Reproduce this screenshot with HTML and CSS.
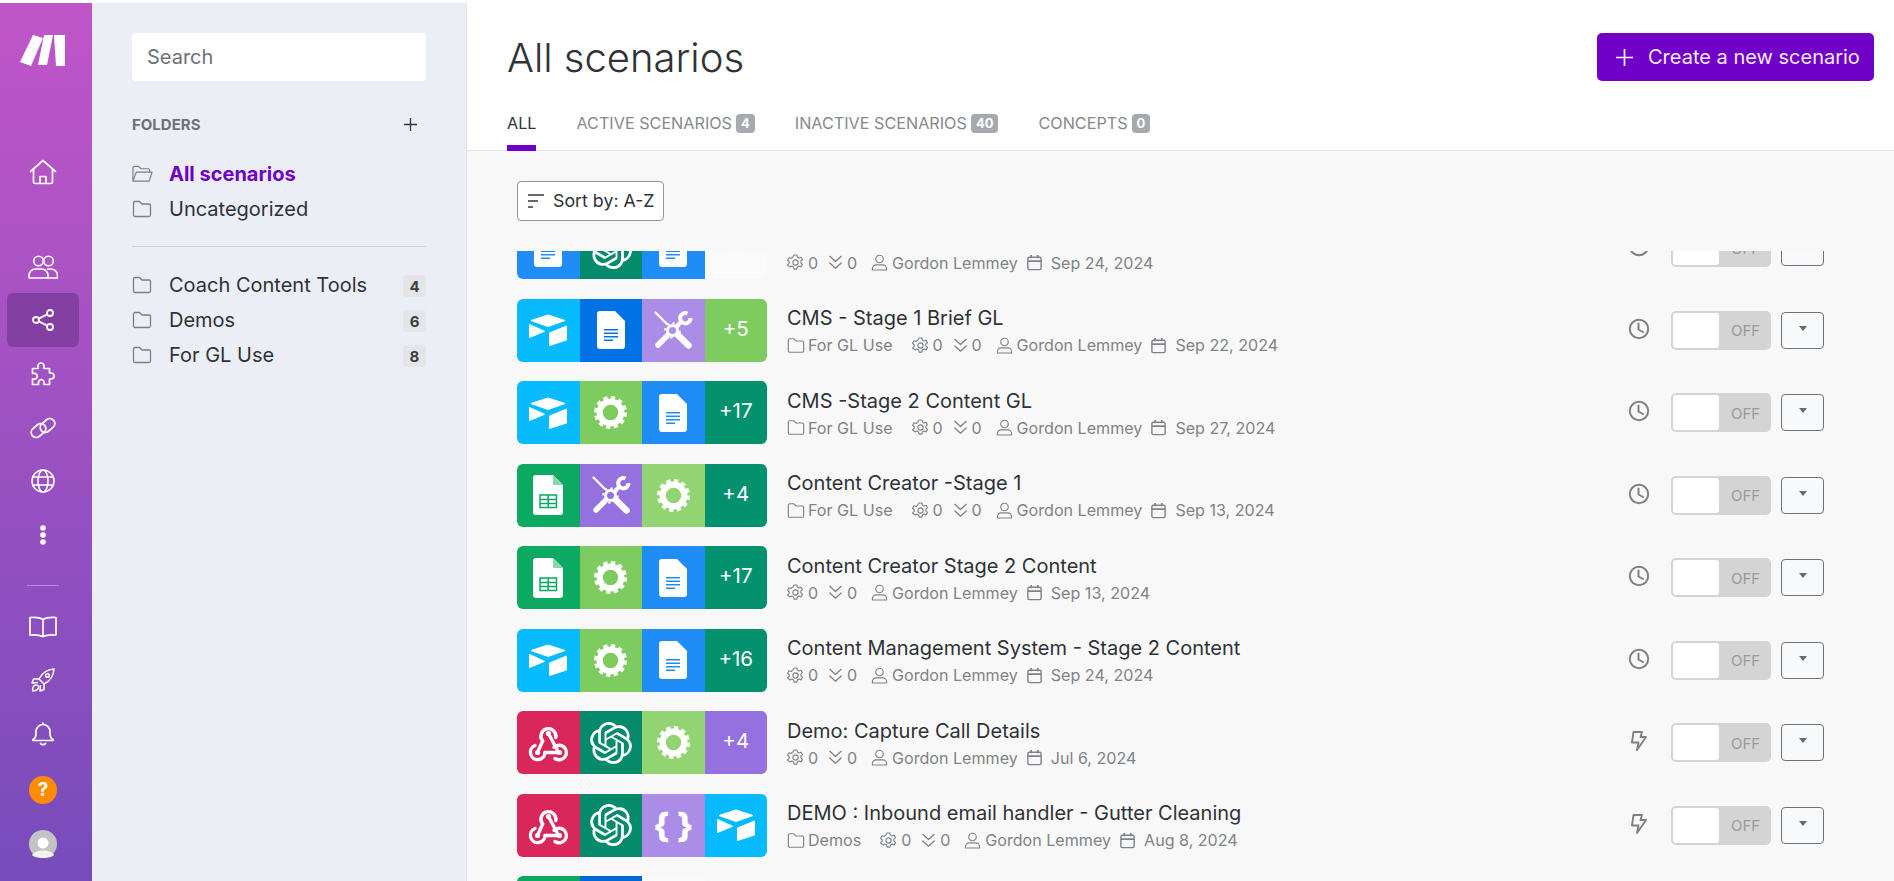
FILE: index.html
```html
<!DOCTYPE html>
<html lang="en">
<head>
<meta charset="utf-8">
<title>All scenarios</title>
<link rel="stylesheet" href="styles.css">
</head>
<body>
<svg class="defs" aria-hidden="true">
  <symbol id="air" viewBox="0 0 38 32"><path d="M19 1 36 6.500 19 12.500 2 6.500Z" fill="#fff" stroke="#fff" stroke-linejoin="round"/><path d="M.5 10.500 15.500 17.300.5 23.500Z" fill="#fff" stroke="#fff" stroke-linejoin="round"/><path d="M20.500 19 37.500 12V26L20.500 31.500Z" fill="#fff" stroke="#fff" stroke-linejoin="round"/></symbol>
  <symbol id="doc" viewBox="0 0 28 38"><path d="M3 0H18L28 10V35a3 3 0 0 1-3 3H3a3 3 0 0 1-3-3V3a3 3 0 0 1 3-3Z" fill="#fff"/><path d="M7 18h14v1.500H7zM7 21.500h14V23H7zM7 25h14v1.500H7zM7 28.500h9V30H7z" fill="currentColor"/></symbol>
  <symbol id="sheet" viewBox="0 0 30 40"><path d="M3 0H20L30 10V37a3 3 0 0 1-3 3H3a3 3 0 0 1-3-3V3a3 3 0 0 1 3-3Z" fill="#fff"/><path d="M20 0 30 10H20Z" fill="#8fd4b0"/><path d="M7 20h16.500v12.500H7zM7 24.500h16.500M7 28.500h16.500M15.200 20v12.500" fill="none" stroke="currentColor" stroke-width="1.500"/></symbol>
  <symbol id="gear" viewBox="0 0 32 32"><circle cx="16" cy="16" r="10.500" fill="none" stroke="#fff" stroke-width="6"/><circle cx="16" cy="16" r="14.500" fill="none" stroke="#fff" stroke-width="3" stroke-dasharray="4.200 3.390"/></symbol>
  <symbol id="tools" viewBox="0 0 40 40"><g fill="none" stroke="#fff" stroke-linecap="round"><path d="M2.500 2.500 14 14" stroke-width="2.200"/><path d="M25 25 35.500 35.500" stroke-width="6.500"/><path d="M14 26 5 35" stroke-width="5.500"/><path d="M28 12 24.500 15.500" stroke-width="4"/><path d="M34.500 3.500A5.200 5.200 0 1 0 37.500 8" stroke-width="4" stroke-linecap="butt"/><circle cx="19.500" cy="20.500" r="5" stroke-width="3"/><circle cx="19.500" cy="20.500" r="7.300" stroke-width="2" stroke-dasharray="2.400 3.300" stroke-linecap="butt"/></g></symbol>
  <symbol id="hook" viewBox="-1.500 -1.500 41 39"><g fill="none" stroke="#fff" stroke-width="3.400" stroke-linecap="round"><path d="M8 28 13.200 16.500A7.500 7.500 0 1 1 26.300 13"/><path d="M19 9 28 26"/><path d="M24.500 22.800A7.300 7.300 0 1 1 25.500 34"/><path d="M30 28H15.500"/><path d="M15.500 28A7.300 7.300 0 1 1 5.500 21"/></g><circle cx="19" cy="9" r="2.600" fill="#fff"/><circle cx="8" cy="28" r="2.600" fill="#fff"/><circle cx="30" cy="28" r="2.600" fill="#fff"/></symbol>
  <symbol id="ai" viewBox="0 0 24 24"><path fill="#fff" d="M22.2819 9.8211a5.9847 5.9847 0 0 0-.5157-4.9108 6.0462 6.0462 0 0 0-6.5098-2.9A6.0651 6.0651 0 0 0 4.9807 4.1818a5.9847 5.9847 0 0 0-3.9977 2.9 6.0462 6.0462 0 0 0 .7427 7.0966 5.98 5.98 0 0 0 .511 4.9107 6.051 6.051 0 0 0 6.5146 2.9001A5.9847 5.9847 0 0 0 13.2599 24a6.0557 6.0557 0 0 0 5.7718-4.2058 5.9894 5.9894 0 0 0 3.9977-2.9001 6.0557 6.0557 0 0 0-.7475-7.0729zm-9.022 12.6081a4.4755 4.4755 0 0 1-2.8764-1.0408l.1419-.0804 4.7783-2.7582a.7948.7948 0 0 0 .3927-.6813v-6.7369l2.02 1.1686a.071.071 0 0 1 .038.052v5.5826a4.504 4.504 0 0 1-4.4945 4.4944zm-9.6607-4.1254a4.4708 4.4708 0 0 1-.5346-3.0137l.142.0852 4.783 2.7582a.7712.7712 0 0 0 .7806 0l5.8428-3.3685v2.3324a.0804.0804 0 0 1-.0332.0615L9.74 19.9502a4.4992 4.4992 0 0 1-6.1408-1.6464zM2.3408 7.8956a4.485 4.485 0 0 1 2.3655-1.9728V11.6a.7664.7664 0 0 0 .3879.6765l5.8144 3.3543-2.0201 1.1685a.0757.0757 0 0 1-.071 0l-4.8303-2.7865A4.504 4.504 0 0 1 2.3408 7.872zm16.5963 3.8558L13.1038 8.364 15.1192 7.2a.0757.0757 0 0 1 .071 0l4.8303 2.7913a4.4944 4.4944 0 0 1-.6765 8.1042v-5.6772a.79.79 0 0 0-.407-.667zm2.0107-3.0231l-.142-.0852-4.7735-2.7818a.7759.7759 0 0 0-.7854 0L9.409 9.2297V6.8974a.0662.0662 0 0 1 .0284-.0615l4.8303-2.7866a4.4992 4.4992 0 0 1 6.6802 4.66zM8.3065 12.863l-2.02-1.1638a.0804.0804 0 0 1-.038-.0567V6.0742a4.4992 4.4992 0 0 1 7.3757-3.4537l-.142.0805L8.704 5.459a.7948.7948 0 0 0-.3927.6813zm1.0976-2.3654l2.602-1.4998 2.6069 1.4998v2.9994l-2.5974 1.4997-2.6067-1.4997Z"/></symbol>

  <symbol id="folder" viewBox="0 0 20 18"><path d="M1.500 3a1.500 1.500 0 0 1 1.500-1.500h4.500L10 4h7a1.500 1.500 0 0 1 1.500 1.500V15a1.500 1.500 0 0 1-1.500 1.500H3A1.500 1.500 0 0 1 1.500 15Z" fill="none" stroke="currentColor" stroke-width="1.300"/></symbol>
  <symbol id="folder-open" viewBox="0 0 22 18"><path d="M1 15.500V2.500A1.500 1.500 0 0 1 2.500 1H7l2.500 2.500H17A1.500 1.500 0 0 1 18.500 5v2M1 16.500 4.500 7H21l-3 9.500Z" fill="none" stroke="currentColor" stroke-width="1.200" stroke-linejoin="round"/></symbol>
  <symbol id="plus" viewBox="0 0 17 17"><path d="M8.500 0V17M0 8.500H17" fill="none" stroke="currentColor" stroke-width="1.700"/></symbol>
  <symbol id="cog" viewBox="0 0 18 18"><g fill="none" stroke="currentColor" stroke-width="1.200" stroke-linejoin="round"><path d="M7.500 1h3l.5 2.300 1.700.9 2.200-.8 1.500 2.600-1.700 1.600v1.800l1.700 1.600-1.500 2.600-2.200-.8-1.700.9-.5 2.300h-3l-.5-2.300-1.700-.9-2.200.8L.6 11.600l1.700-1.600V8.200L.6 6.600l1.500-2.600 2.200.8L6 3.300Z"/><circle cx="9" cy="9" r="2.800"/></g></symbol>
  <symbol id="chev" viewBox="0 0 18 18"><path d="M3 2.500 9 8 15 2.500M3 9.500 9 15 15 9.500" fill="none" stroke="currentColor" stroke-width="1.400" stroke-linecap="round" stroke-linejoin="round"/></symbol>
  <symbol id="user" viewBox="0 0 18 18"><g fill="none" stroke="currentColor" stroke-width="1.200"><circle cx="9" cy="5.300" r="4"/><path d="M1.500 17v-1.500a4 4 0 0 1 4-4h7a4 4 0 0 1 4 4V17Z" stroke-linejoin="round"/></g></symbol>
  <symbol id="cal" viewBox="0 0 18 18"><g fill="none" stroke="currentColor" stroke-width="1.500"><rect x="2" y="3.500" width="14" height="13" rx="1.500"/><path d="M2 7.500h14M5.500 1v3.500M12.500 1v3.500" stroke-width="1.800"/></g></symbol>
  <symbol id="clock" viewBox="0 0 22 22"><g fill="none" stroke="#808080" stroke-width="2"><circle cx="11" cy="11" r="9.200"/><path d="M10.500 5.500V11.500L15 14" stroke-linecap="round"/></g></symbol>
  <symbol id="bolt" viewBox="0 0 16 20"><path d="M2.500 1H11L9.500 6H15L6 19l1.500-7.500H1Z" fill="none" stroke="#808080" stroke-width="1.900" stroke-linejoin="round"/></symbol>

  <symbol id="n-home" viewBox="0 0 28 26"><path d="M1.500 12.500 14 1.500 26.500 12.500M4.500 10.500V23a1.500 1.500 0 0 0 1.500 1.500H22a1.500 1.500 0 0 0 1.500-1.500V10.500M11 24.500V17.500H17V24.500" fill="none" stroke="#fff" stroke-width="1.700" stroke-linejoin="round" stroke-linecap="round"/></symbol>
  <symbol id="n-team" viewBox="0 0 30 24"><g fill="none" stroke="#fff" stroke-width="1.600"><circle cx="10.500" cy="6" r="4.800"/><circle cx="20.500" cy="6" r="4.800"/><path d="M1 23v-2.500a6.500 6.500 0 0 1 6.500-6.500h6a6.500 6.500 0 0 1 6.500 6.500V23Z" stroke-linejoin="round"/><path d="M19 14h4a6.500 6.500 0 0 1 6.500 6.500V23H20"/></g></symbol>
  <symbol id="n-share" viewBox="0 0 22 22"><g fill="none" stroke="#fff" stroke-width="1.800"><circle cx="4" cy="11" r="3"/><circle cx="18" cy="4" r="3"/><circle cx="18" cy="18" r="3"/><path d="M6.700 9.600 15.300 5.400M6.700 12.400 15.300 16.600"/></g></symbol>
  <symbol id="n-puzzle" viewBox="0 0 25 25"><path d="M1.500 7.500H7V5a3 3 0 1 1 6 0v2.500h5.500V12H20a3 3 0 1 1 0 6h-1.500v5.500H13V22a2.800 2.800 0 1 0-5.500 0v1.500h-6V18H3a2.800 2.800 0 1 0 0-5.500H1.500Z" fill="none" stroke="#fff" stroke-width="1.700" stroke-linejoin="round"/></symbol>
  <symbol id="n-link" viewBox="0 0 28 22"><g fill="none" stroke="#fff" stroke-width="1.800"><rect x="1.500" y="8.500" width="16" height="10" rx="5" transform="rotate(-40 9.500 13.500)"/><rect x="10.500" y="3.500" width="16" height="10" rx="5" transform="rotate(-40 18.500 8.500)"/></g></symbol>
  <symbol id="n-globe" viewBox="0 0 24 24"><g fill="none" stroke="#fff" stroke-width="1.600"><circle cx="12" cy="12" r="11"/><ellipse cx="12" cy="12" rx="5" ry="11"/><path d="M2 8h20M2 16h20"/></g></symbol>
  <symbol id="n-dots" viewBox="0 0 6 20"><circle cx="3" cy="3" r="2.800" fill="#fff"/><circle cx="3" cy="10" r="2.800" fill="#fff"/><circle cx="3" cy="17" r="2.800" fill="#fff"/></symbol>
  <symbol id="n-book" viewBox="0 0 28 22"><path d="M14 3.500C11 1.500 6 1 1 1.500V19C6 18.500 11 19 14 20.500 17 19 22 18.500 27 19V1.500C22 1 17 1.500 14 3.500ZM14 3.500V20.500" fill="none" stroke="#fff" stroke-width="1.700" stroke-linejoin="round"/></symbol>
  <symbol id="n-rocket" viewBox="0 0 24 24"><g fill="none" stroke="#fff" stroke-width="1.500" stroke-linejoin="round"><path d="M23 1c-7 .5-12 4-15 10l5 5c6-3 9.500-8 10-15Z"/><circle cx="16.500" cy="7.500" r="1.800"/><path d="M8 11H2.500L1 15l6-.5M13 16v5.500L9 23l.5-6"/><path d="M2 23c-1-3 .5-6 3-6s3.500 2.500 2 4c-1.500 1.500-3 2-5 2Z"/></g></symbol>
  <symbol id="n-bell" viewBox="0 0 22 24"><path d="M1 17.500c2-1 3-3 3-6.500V9.500a7 7 0 0 1 14 0V11c0 3.500 1 5.500 3 6.500v1H1ZM11 2.500V1M8.500 21.500c1 1.500 4 1.500 5 0" fill="none" stroke="#fff" stroke-width="1.700" stroke-linejoin="round" stroke-linecap="round"/></symbol>
  <symbol id="n-avatar" viewBox="0 0 28 28"><circle cx="14" cy="14" r="14" fill="#c3c3c3"/><circle cx="14" cy="13" r="5.500" fill="#fff"/><path d="M3 25c3-6 19-6 22 0-3 4-19 4-22 0Z" fill="#f2f2f2"/></symbol>
</svg>

<div class="app">
  <nav class="rail">
    <svg class="logo" viewBox="0 0 45 31" aria-label="Make"><path d="M13 0 23 3 11 31 0 27Z M24 0H33L27 30H18Z M34 0H45V31H36Z" fill="#fff"/></svg>
    <a class="nav nav-home"><svg class="nv i28"><use href="#n-home"/></svg></a>
    <div class="nav-group">
      <a class="nav"><svg class="nv i30"><use href="#n-team"/></svg></a>
      <a class="nav active"><svg class="nv i22"><use href="#n-share"/></svg></a>
      <a class="nav"><svg class="nv i25"><use href="#n-puzzle"/></svg></a>
      <a class="nav"><svg class="nv i28"><use href="#n-link"/></svg></a>
      <a class="nav"><svg class="nv i24"><use href="#n-globe"/></svg></a>
      <a class="nav"><svg class="nv dots"><use href="#n-dots"/></svg></a>
    </div>
    <hr class="rail-rule">
    <div class="nav-group">
      <a class="nav"><svg class="nv i28"><use href="#n-book"/></svg></a>
      <a class="nav"><svg class="nv i24"><use href="#n-rocket"/></svg></a>
      <a class="nav"><svg class="nv i22b"><use href="#n-bell"/></svg></a>
      <a class="nav nav-help"><span class="help">?</span></a>
      <a class="nav nav-avatar"><svg class="nv avatar"><use href="#n-avatar"/></svg></a>
    </div>
  </nav>

  <aside class="panel">
    <div class="search">Search</div>
    <div class="folders-head"><span>FOLDERS</span><svg class="folders-plus"><use href="#plus"/></svg></div>
    <ul class="folder-list">
      <li class="folder current"><svg class="fi fi-open"><use href="#folder-open"/></svg><span>All scenarios</span></li>
      <li class="folder"><svg class="fi"><use href="#folder"/></svg><span>Uncategorized</span></li>
    </ul>
    <hr class="panel-rule">
    <ul class="folder-list">
      <li class="folder"><svg class="fi"><use href="#folder"/></svg><span>Coach Content Tools</span><b class="count">4</b></li>
      <li class="folder"><svg class="fi"><use href="#folder"/></svg><span>Demos</span><b class="count">6</b></li>
      <li class="folder"><svg class="fi"><use href="#folder"/></svg><span>For GL Use</span><b class="count">8</b></li>
    </ul>
  </aside>

  <main class="main">
    <header class="head">
      <h1>All scenarios</h1>
      <button class="create"><svg class="create-plus"><use href="#plus"/></svg>Create a new scenario</button>
    </header>
    <div class="tabs">
      <a class="tab on">ALL</a>
      <a class="tab">ACTIVE SCENARIOS<i class="tag">4</i></a>
      <a class="tab">INACTIVE SCENARIOS<i class="tag">40</i></a>
      <a class="tab">CONCEPTS<i class="tag">0</i></a>
    </div>
    <div class="content">
      <div class="toolbar">
        <button class="sort"><svg class="sort-ic" viewBox="0 0 16 14"><path d="M0 1h16M0 7h10M0 13h5" fill="none" stroke="#33373b" stroke-width="1.600"/></svg>Sort by: A-Z</button>
      </div>
      <div class="list">
        <div class="list-inner">

          <div class="row">
            <div class="tiles"><div class="tile c-doc"><svg class="t-doc"><use href="#doc"/></svg></div><div class="tile c-ai"><svg class="t-ai"><use href="#ai"/></svg></div><div class="tile c-doc"><svg class="t-doc"><use href="#doc"/></svg></div><div class="tile c-blank"><svg class="t-ghost" viewBox="0 0 48 24"><path d="M24 0 48 20V24H0V20Z" fill="#fbfbfb"/></svg></div></div>
            <div class="info"><div class="name"></div><div class="meta"><svg class="m"><use href="#cog"/></svg><span class="n">0</span><svg class="m"><use href="#chev"/></svg><span class="n">0</span><svg class="m mu"><use href="#user"/></svg><span class="who">Gordon Lemmey</span><svg class="m"><use href="#cal"/></svg><span class="when">Sep 24, 2024</span></div></div>
            <div class="ctl"><svg class="sched"><use href="#clock"/></svg><div class="switch"><span class="thumb"></span><span class="off">OFF</span></div><button class="drop"><span class="caret"></span></button></div>
          </div>

          <div class="row">
            <div class="tiles"><div class="tile c-air"><svg class="t-air"><use href="#air"/></svg></div><div class="tile c-docd"><svg class="t-doc"><use href="#doc"/></svg></div><div class="tile c-toolsl"><svg class="t-tools"><use href="#tools"/></svg></div><div class="tile txt c-green">+5</div></div>
            <div class="info"><div class="name">CMS - Stage 1 Brief GL</div><div class="meta"><svg class="m mf"><use href="#folder"/></svg><span class="fold">For GL Use</span><svg class="m"><use href="#cog"/></svg><span class="n">0</span><svg class="m"><use href="#chev"/></svg><span class="n">0</span><svg class="m mu"><use href="#user"/></svg><span class="who">Gordon Lemmey</span><svg class="m"><use href="#cal"/></svg><span class="when">Sep 22, 2024</span></div></div>
            <div class="ctl"><svg class="sched"><use href="#clock"/></svg><div class="switch"><span class="thumb"></span><span class="off">OFF</span></div><button class="drop"><span class="caret"></span></button></div>
          </div>

          <div class="row">
            <div class="tiles"><div class="tile c-air"><svg class="t-air"><use href="#air"/></svg></div><div class="tile c-gear"><svg class="t-gear"><use href="#gear"/></svg></div><div class="tile c-doc"><svg class="t-doc"><use href="#doc"/></svg></div><div class="tile txt c-teal">+17</div></div>
            <div class="info"><div class="name">CMS -Stage 2 Content GL</div><div class="meta"><svg class="m mf"><use href="#folder"/></svg><span class="fold">For GL Use</span><svg class="m"><use href="#cog"/></svg><span class="n">0</span><svg class="m"><use href="#chev"/></svg><span class="n">0</span><svg class="m mu"><use href="#user"/></svg><span class="who">Gordon Lemmey</span><svg class="m"><use href="#cal"/></svg><span class="when">Sep 27, 2024</span></div></div>
            <div class="ctl"><svg class="sched"><use href="#clock"/></svg><div class="switch"><span class="thumb"></span><span class="off">OFF</span></div><button class="drop"><span class="caret"></span></button></div>
          </div>

          <div class="row">
            <div class="tiles"><div class="tile c-sheet"><svg class="t-sheet"><use href="#sheet"/></svg></div><div class="tile c-purple"><svg class="t-tools"><use href="#tools"/></svg></div><div class="tile c-gearl"><svg class="t-gear"><use href="#gear"/></svg></div><div class="tile txt c-teal">+4</div></div>
            <div class="info"><div class="name">Content Creator -Stage 1</div><div class="meta"><svg class="m mf"><use href="#folder"/></svg><span class="fold">For GL Use</span><svg class="m"><use href="#cog"/></svg><span class="n">0</span><svg class="m"><use href="#chev"/></svg><span class="n">0</span><svg class="m mu"><use href="#user"/></svg><span class="who">Gordon Lemmey</span><svg class="m"><use href="#cal"/></svg><span class="when">Sep 13, 2024</span></div></div>
            <div class="ctl"><svg class="sched"><use href="#clock"/></svg><div class="switch"><span class="thumb"></span><span class="off">OFF</span></div><button class="drop"><span class="caret"></span></button></div>
          </div>

          <div class="row">
            <div class="tiles"><div class="tile c-sheet"><svg class="t-sheet"><use href="#sheet"/></svg></div><div class="tile c-gear"><svg class="t-gear"><use href="#gear"/></svg></div><div class="tile c-doc"><svg class="t-doc"><use href="#doc"/></svg></div><div class="tile txt c-teal">+17</div></div>
            <div class="info"><div class="name">Content Creator Stage 2 Content</div><div class="meta"><svg class="m"><use href="#cog"/></svg><span class="n">0</span><svg class="m"><use href="#chev"/></svg><span class="n">0</span><svg class="m mu"><use href="#user"/></svg><span class="who">Gordon Lemmey</span><svg class="m"><use href="#cal"/></svg><span class="when">Sep 13, 2024</span></div></div>
            <div class="ctl"><svg class="sched"><use href="#clock"/></svg><div class="switch"><span class="thumb"></span><span class="off">OFF</span></div><button class="drop"><span class="caret"></span></button></div>
          </div>

          <div class="row">
            <div class="tiles"><div class="tile c-air"><svg class="t-air"><use href="#air"/></svg></div><div class="tile c-gear"><svg class="t-gear"><use href="#gear"/></svg></div><div class="tile c-doc"><svg class="t-doc"><use href="#doc"/></svg></div><div class="tile txt c-teal">+16</div></div>
            <div class="info"><div class="name">Content Management System - Stage 2 Content</div><div class="meta"><svg class="m"><use href="#cog"/></svg><span class="n">0</span><svg class="m"><use href="#chev"/></svg><span class="n">0</span><svg class="m mu"><use href="#user"/></svg><span class="who">Gordon Lemmey</span><svg class="m"><use href="#cal"/></svg><span class="when">Sep 24, 2024</span></div></div>
            <div class="ctl"><svg class="sched"><use href="#clock"/></svg><div class="switch"><span class="thumb"></span><span class="off">OFF</span></div><button class="drop"><span class="caret"></span></button></div>
          </div>

          <div class="row">
            <div class="tiles"><div class="tile c-hook"><svg class="t-hook"><use href="#hook"/></svg></div><div class="tile c-ai"><svg class="t-ai"><use href="#ai"/></svg></div><div class="tile c-gearl"><svg class="t-gear"><use href="#gear"/></svg></div><div class="tile txt c-purple">+4</div></div>
            <div class="info"><div class="name">Demo: Capture Call Details</div><div class="meta"><svg class="m"><use href="#cog"/></svg><span class="n">0</span><svg class="m"><use href="#chev"/></svg><span class="n">0</span><svg class="m mu"><use href="#user"/></svg><span class="who">Gordon Lemmey</span><svg class="m"><use href="#cal"/></svg><span class="when">Jul 6, 2024</span></div></div>
            <div class="ctl"><svg class="sched sched-bolt"><use href="#bolt"/></svg><div class="switch"><span class="thumb"></span><span class="off">OFF</span></div><button class="drop"><span class="caret"></span></button></div>
          </div>

          <div class="row">
            <div class="tiles"><div class="tile c-hook"><svg class="t-hook"><use href="#hook"/></svg></div><div class="tile c-ai"><svg class="t-ai"><use href="#ai"/></svg></div><div class="tile c-toolsl braces">{ }</div><div class="tile c-air"><svg class="t-air"><use href="#air"/></svg></div></div>
            <div class="info"><div class="name">DEMO : Inbound email handler - Gutter Cleaning</div><div class="meta"><svg class="m mf"><use href="#folder"/></svg><span class="fold">Demos</span><svg class="m"><use href="#cog"/></svg><span class="n">0</span><svg class="m"><use href="#chev"/></svg><span class="n">0</span><svg class="m mu"><use href="#user"/></svg><span class="who">Gordon Lemmey</span><svg class="m"><use href="#cal"/></svg><span class="when">Aug 8, 2024</span></div></div>
            <div class="ctl"><svg class="sched sched-bolt"><use href="#bolt"/></svg><div class="switch"><span class="thumb"></span><span class="off">OFF</span></div><button class="drop"><span class="caret"></span></button></div>
          </div>

          <div class="row">
            <div class="tiles"><div class="tile c-sheet"></div><div class="tile c-docx"></div><div class="tile c-blank"></div><div class="tile c-none"></div></div>
          </div>

        </div>
      </div>
    </div>
  </main>
</div>
</body>
</html>
```

FILE: styles.css
```css
* { box-sizing: border-box; }
html, body { margin: 0; height: 100%; }
body {
  height: 881px;
  overflow: hidden;
  padding-top: 3px;
  background: #fff;
  color: #2f3236;
  font-family: Inter, "Liberation Sans", sans-serif;
}
.defs { display: none; }
.app { display: flex; height: 878px; }

/* icon rail */
.rail {
  width: 92px;
  flex: none;
  display: flex;
  flex-direction: column;
  align-items: flex-start;
  padding-left: 7px;
  background: linear-gradient(180deg, #c155c9 0%, #774cbb 100%);
}
.logo { width: 45px; height: 31px; margin: 32px 0 0 13px; flex: none; }
.nav {
  width: 72px;
  height: 53.7px;
  display: flex;
  align-items: center;
  justify-content: center;
  border-radius: 6px;
}
.nav-home { margin-top: 79px; }
.nav-group { display: flex; flex-direction: column; }
.nav-home + .nav-group { margin-top: 41px; }
.nav.active { background: #833fa1; }
.nav-help { margin-top: 2px; }
.nav-avatar { margin-top: 1px; }
.nv { display: block; }
.i28 { width: 28px; height: 26px; }
.i30 { width: 30px; height: 24px; }
.i22 { width: 22px; height: 22px; }
.i25 { width: 25px; height: 25px; }
.i24 { width: 24px; height: 24px; }
.i22b { width: 22px; height: 24px; }
.dots { width: 6px; height: 20px; }
.avatar { width: 28px; height: 28px; }
.rail-rule {
  width: 32px;
  height: 1px;
  margin: 23px 0 14px 20px;
  border: 0;
  background: rgba(255, 255, 255, .35);
}
.help {
  width: 28px;
  height: 28px;
  border-radius: 50%;
  background: #ff8c00;
  color: #fff;
  font-weight: 700;
  font-size: 19px;
  line-height: 28px;
  text-align: center;
}

/* folder panel */
.panel {
  width: 375px;
  flex: none;
  padding: 30px 40px 0;
  background: #ebeef5;
  border-right: 1px solid #dfe2e8;
}
.search {
  height: 48px;
  padding: 0 15px;
  border-radius: 4px;
  background: #fff;
  color: #6b7178;
  font-size: 20px;
  line-height: 48px;
}
.folders-head {
  display: flex;
  justify-content: space-between;
  align-items: center;
  height: 24px;
  margin-top: 31px;
  color: #6d7278;
  font-size: 15px;
  font-weight: 700;
}
.folders-plus {
  width: 13px;
  height: 13px;
  margin-right: 9px;
  color: #33373b;
}
.folder-list { list-style: none; margin: 20px 0 0; padding: 0; }
.folder {
  display: flex;
  align-items: center;
  height: 35px;
  color: #2f3236;
  font-size: 20px;
}
.folder > span { flex: 1; }
.fi { width: 20px; height: 18px; margin-right: 17px; flex: none; color: #7b7f84; }
.fi-open { width: 21px; margin-right: 16px; }
.folder.current { color: #6d00c4; font-weight: 700; }
.folder.current .fi { color: #7b7f84; }
.count {
  width: 23px;
  height: 22px;
  border-radius: 4px;
  background: #e3e5e9;
  color: #3c3f43;
  font-size: 15px;
  line-height: 23px;
  text-align: center;
  margin-top: 2px;
}
.panel-rule {
  height: 1px;
  margin: 20px 0 0;
  border: 0;
  background: #ccd0d6;
}

/* main */
.main { flex: 1; min-width: 0; display: flex; flex-direction: column; }
.head {
  display: flex;
  justify-content: space-between;
  align-items: center;
  height: 48px;
  margin-top: 30px;
  padding: 0 20px 0 40px;
  flex: none;
}
h1 { margin: 0; font-size: 40px; font-weight: 300; color: #2f3236; }
.create {
  display: flex;
  align-items: center;
  width: 277px;
  height: 48px;
  padding: 0 0 0 19px;
  border: 0;
  border-radius: 5px;
  background: #7000c7;
  color: #f6eafd;
  font: 400 20px Inter, sans-serif;
}
.create-plus { width: 17px; height: 17px; margin-right: 15px; color: #fff; flex: none; }
.tabs {
  display: flex;
  gap: 40px;
  height: 56px;
  margin-top: 14px;
  padding: 0 40px;
  border-bottom: 1px solid #e2e3e5;
  flex: none;
}
.tab {
  height: 56px;
  display: flex;
  align-items: center;
  padding-top: 6px;
  border-bottom: 6px solid transparent;
  color: #85888d;
  font-size: 16.200px;
}
.tab.on { color: #2f3236; border-bottom-color: #7000c7; }
.tag {
  margin-left: 4px;
  padding: 0 5px;
  min-width: 18px;
  height: 19px;
  border-radius: 4px;
  background: #a6a9ae;
  color: #fff;
  font-size: 13px;
  font-style: normal;
  font-weight: 700;
  line-height: 19px;
  text-align: center;
}
.content { flex: 1; min-height: 0; display: flex; flex-direction: column; background: #f8f8f8; }
.toolbar { padding: 30px 50px; flex: none; }
.sort {
  display: flex;
  align-items: center;
  width: 147px;
  height: 40px;
  padding: 0 0 1px 10px;
  border: 1px solid #92959a;
  border-radius: 4px;
  background: #fff;
  color: #2f3236;
  font: 400 17.800px Inter, sans-serif;
}
.sort-ic { width: 16px; height: 14px; margin-right: 9px; }
.list { flex: 1; min-height: 0; overflow: hidden; }
.list-inner { margin-top: -44.350px; padding: 0 70px 0 50px; }
.row { display: flex; align-items: center; height: 82.500px; }
.tiles {
  display: grid;
  grid-template-columns: repeat(4, 1fr);
  width: 250px;
  height: 63px;
  flex: none;
  border-radius: 6px;
  overflow: hidden;
}
.tile {
  display: flex;
  align-items: center;
  justify-content: center;
  color: #fff;
  font-size: 20px;
}
.tile.txt { padding-bottom: 4px; font-size: 20.500px; }
.tile svg { display: block; flex: none; }
.t-air { width: 38px; height: 32px; }
.t-doc { width: 28px; height: 38px; }
.t-sheet { width: 30px; height: 40px; }
.t-gear { width: 33px; height: 33px; }
.t-tools { width: 40px; height: 40px; }
.t-hook { width: 41px; height: 39px; }
.t-ai { width: 42px; height: 42px; }
.t-ghost { width: 48px; height: 24px; align-self: flex-end; margin-bottom: 6px; }
.braces { font-size: 34px; font-weight: 800; }
.c-doc { background: #1f8df5; color: #1f8df5; }
.c-docd { background: #0072e6; color: #0072e6; }
.c-docx { background: #0068d4; }
.c-air { background: #08bbff; }
.c-ai { background: #068a6c; }
.c-blank { background: #fafafa; }
.c-none { background: transparent; }
.c-toolsl { background: #ab8ce6; color: #fff; }
.c-purple { background: #9471de; color: #fff; }
.c-green { background: #7ecc5f; }
.c-gear { background: #7ecb5f; }
.c-gearl { background: #93d472; }
.c-teal { background: #04916e; }
.c-sheet { background: #0ba961; color: #0ba961; }
.c-hook { background: #d9265b; }

.info { flex: 1; min-width: 0; margin-left: 20px; padding-top: 3px; }
.name { min-height: 27px; font-size: 20px; line-height: 27px; color: #2f3236; }
.meta {
  display: flex;
  align-items: center;
  height: 26px;
  color: #7f8387;
  font-size: 16.100px;
}
.m { width: 17px; height: 17px; flex: none; margin-right: 4px; }
.mf { width: 18px; margin-right: 3px; }
.n { width: 10px; margin-right: 9px; }
.n + .m { margin-right: 3px; }
.n + .mu { margin-left: 5px; margin-right: 4px; }
.fold { margin-right: 19px; }
.who { margin-right: 8px; }
.when { margin-left: 4px; }

.ctl { display: flex; align-items: center; flex: none; }
.sched { width: 22px; height: 22px; margin-right: 21px; margin-top: -3px; }
.sched-bolt { width: 16px; height: 20px; margin-left: 3px; margin-right: 24px; }
.switch {
  display: flex;
  align-items: center;
  width: 100px;
  height: 39px;
  padding: 2px;
  border-radius: 5px;
  background: #d4d4d4;
}
.thumb { width: 46px; height: 35px; border-radius: 3px; background: #fff; }
.off { flex: 1; padding-top: 1px; padding-left: 3px; text-align: center; color: #9a9a9a; font-size: 15px; }
.drop {
  display: flex;
  align-items: center;
  justify-content: center;
  width: 43px;
  height: 37px;
  margin-left: 10px;
  padding: 0 0 4px;
  border: 1px solid #6f7378;
  border-radius: 4px;
  background: #f8f9fa;
}
.caret {
  width: 0;
  height: 0;
  border-left: 4.500px solid transparent;
  border-right: 4.500px solid transparent;
  border-top: 5px solid #65696e;
}
```
